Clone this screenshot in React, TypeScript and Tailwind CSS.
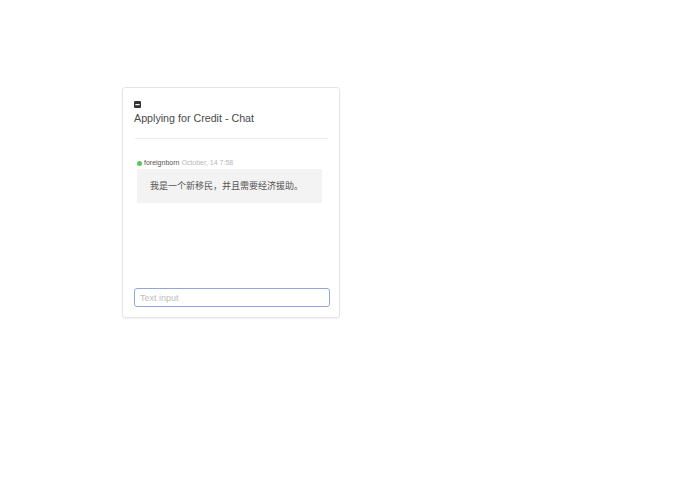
export default function App() {
  return (
    <div className="w-full h-[494px] bg-white pt-[87px] pl-[122px]" style={{ fontFamily: '"Liberation Sans", "Noto Sans CJK SC", sans-serif' }}>
      <div className="w-[218px] h-[231px] flex flex-col border border-[#e4e4e4] rounded-[3px] shadow-[0_1px_2px_rgba(0,0,0,0.06)] pl-[11px] pr-[10px] pt-[13px] pb-[10px]">
        <svg width="7" height="7" viewBox="0 0 7 7">
          <rect x="0" y="0" width="7" height="7" rx="1.2" fill="#333" />
          <rect x="1.4" y="3" width="4.2" height="1.2" fill="#fff" />
        </svg>
        <div className="mt-[3px] text-[10.7px] leading-[14px] text-[#4a4a4a]">Applying for Credit - Chat</div>
        <div className="mt-[13px] h-px bg-[#ececec] mx-[1px]" />
        <div className="mt-[19px] flex items-center h-[10px] pl-[3px] text-[7px]">
          <span className="w-[5px] h-[5px] rounded-full bg-[#5bc65b] mr-[2px]" />
          <span className="text-[#555] font-medium">foreignborn</span>
          <span className="text-[#b8b8b8] ml-[2px]">October, 14 7:58</span>
        </div>
        <div className="mt-[1px] ml-[3px] w-[185px] h-[34px] bg-[#f3f3f3] flex items-center pl-[13px] text-[9px] text-[#555]" style={{ fontFamily: '"Noto Sans CJK SC", sans-serif' }}>
          我是一个新移民，并且需要经济援助。
        </div>
        <div className="flex-1" />
        <input
          placeholder="Text input"
          className="h-[19px] w-[196px] border-[1.5px] border-[#93a6dc] rounded-[3px] px-[5px] text-[9px] text-[#555] placeholder:text-[#bdbdbd] outline-none"
          style={{ fontFamily: '"Liberation Sans", sans-serif' }}
        />
      </div>
    </div>
  );
}
